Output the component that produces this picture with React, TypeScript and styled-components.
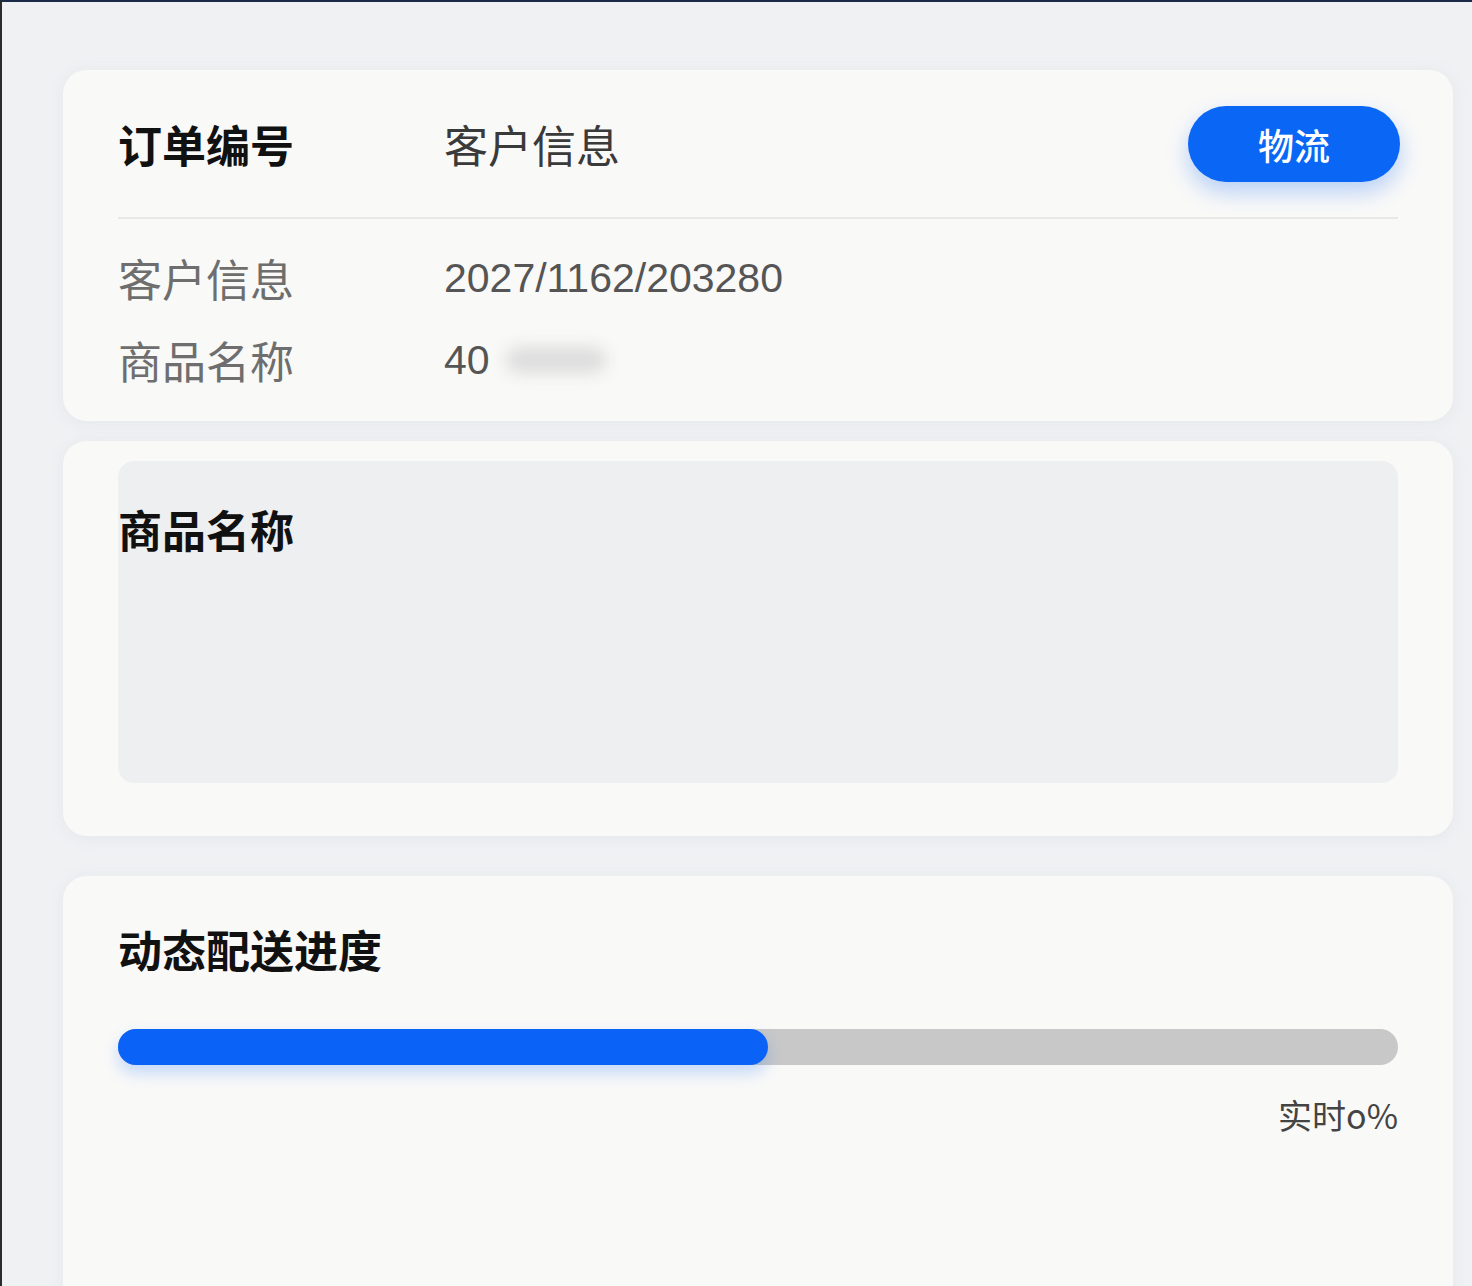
import styled, { createGlobalStyle } from 'styled-components';

const GlobalStyle = createGlobalStyle`
  html, body {
    margin: 0;
    padding: 0;
    height: 100%;
    overflow: hidden;
  }
  body {
    background: #f0f1f3;
    font-family: "Noto Sans CJK SC", "Noto Sans", sans-serif;
    border-top: 2px solid #1c2b48;
    border-left: 2px solid #2b2b2b;
    box-sizing: border-box;
  }
`;

const Page = styled.div`
  display: flex;
  flex-direction: column;
  padding: 68px 19px 0 61px;
`;

const Card = styled.section<{ $top?: number; $pad?: string; $minHeight?: number }>`
  background: #f9f9f8;
  border-radius: 24px;
  margin-top: ${(p) => p.$top ?? 0}px;
  padding: ${(p) => p.$pad ?? '0 55px'};
  min-height: ${(p) => (p.$minHeight ? `${p.$minHeight}px` : 'auto')};
  box-shadow: 0 2px 14px rgba(200, 205, 215, 0.25);
  box-sizing: border-box;
`;

const HeaderRow = styled.div`
  display: flex;
  align-items: center;
  height: 76px;
`;

const LabelCell = styled.div<{ $strong?: boolean }>`
  width: 326px;
  font-size: 44px;
  line-height: 52px;
  font-weight: ${(p) => (p.$strong ? 700 : 400)};
  color: ${(p) => (p.$strong ? '#111' : '#6e6e6e')};
`;

const HeadValue = styled.div`
  font-size: 44px;
  line-height: 52px;
  color: #3a3a3a;
`;

const Pill = styled.button`
  margin-left: auto;
  margin-right: -2px;
  width: 212px;
  height: 76px;
  border: none;
  border-radius: 38px;
  background: #0a66f5;
  color: #fff;
  font-family: inherit;
  font-size: 36px;
  font-weight: 500;
  box-shadow: 0 10px 22px rgba(10, 102, 245, 0.28);
`;

const Divider = styled.div`
  height: 2px;
  background: #e8e8e8;
  margin-top: 35px;
`;

const InfoList = styled.div`
  display: flex;
  flex-direction: column;
  gap: 30px;
  padding: 33px 0 35px;
`;

const InfoRow = styled.div`
  display: flex;
  align-items: center;
  height: 52px;
`;

const Value = styled.div`
  font-family: "Liberation Sans", "Noto Sans", sans-serif;
  font-size: 41px;
  color: #555;
  display: flex;
  align-items: center;
`;

const Smudge = styled.span`
  display: inline-block;
  width: 100px;
  height: 26px;
  margin-left: 16px;
  background: #dcdcdc;
  border-radius: 13px;
  filter: blur(8px);
`;

const GreyPanel = styled.div`
  height: 322px;
  background: #eeeff0;
  border-radius: 16px;
`;

const SectionTitle = styled.h2<{ $top: number }>`
  margin: 0;
  padding-top: ${(p) => p.$top}px;
  font-size: 44px;
  line-height: 52px;
  font-weight: 700;
  color: #111;
`;

const Track = styled.div`
  margin-top: 54px;
  height: 36px;
  border-radius: 18px;
  background: #c8c8c8;
  display: flex;
`;

const Fill = styled.div`
  height: 100%;
  border-radius: 18px;
  background: #0a62f7;
  box-shadow: 0 8px 16px rgba(10, 98, 247, 0.22);
`;

const Caption = styled.div`
  margin-top: 30px;
  text-align: right;
  font-size: 34px;
  line-height: 40px;
  color: #444;
`;

const progress = 0.508;

export default function App() {
  return (
    <>
      <GlobalStyle />
      <Page>
        <Card $pad="36px 55px 0">
          <HeaderRow>
            <LabelCell $strong>订单编号</LabelCell>
            <HeadValue>客户信息</HeadValue>
            <Pill>物流</Pill>
          </HeaderRow>
          <Divider />
          <InfoList>
            <InfoRow>
              <LabelCell>客户信息</LabelCell>
              <Value>2027/1162/203280</Value>
            </InfoRow>
            <InfoRow>
              <LabelCell>商品名称</LabelCell>
              <Value>
                40
                <Smudge />
              </Value>
            </InfoRow>
          </InfoList>
        </Card>

        <Card $top={20} $pad="20px 55px 53px">
          <GreyPanel>
            <SectionTitle $top={42}>商品名称</SectionTitle>
          </GreyPanel>
        </Card>

        <Card $top={40} $pad="47px 55px 0" $minHeight={450}>
          <SectionTitle $top={0}>动态配送进度</SectionTitle>
          <Track>
            <Fill style={{ width: `${progress * 100}%` }} />
          </Track>
          <Caption>实时o%</Caption>
        </Card>
      </Page>
    </>
  );
}
